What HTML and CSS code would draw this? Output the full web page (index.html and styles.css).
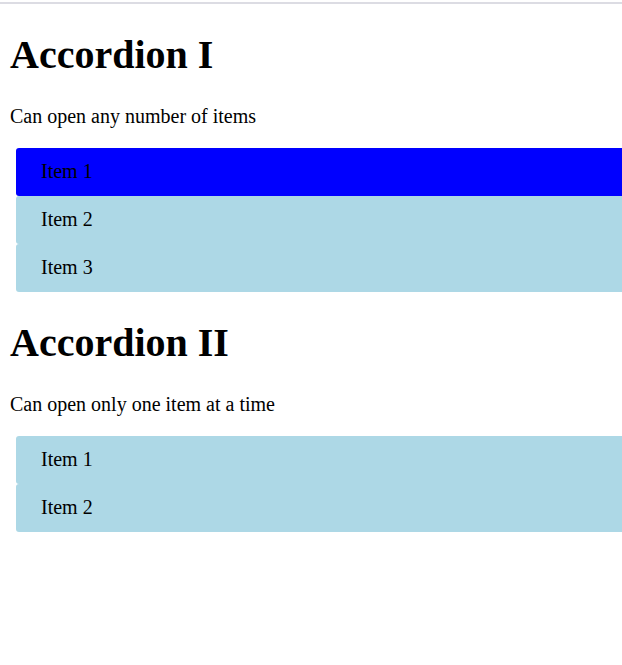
FILE: index.html
```html
<!DOCTYPE html>
<html>
<head>
<meta charset="utf-8">
<link rel="stylesheet" href="styles.css">
</head>
<body>
<div class="topbar"></div>
<main class="page">
  <section class="section">
    <h1 class="title">Accordion I</h1>
    <p class="desc">Can open any number of items</p>
    <div class="accordion">
      <div class="item active">Item 1</div>
      <div class="item">Item 2</div>
      <div class="item">Item 3</div>
    </div>
  </section>
  <section class="section">
    <h1 class="title">Accordion II</h1>
    <p class="desc">Can open only one item at a time</p>
    <div class="accordion">
      <div class="item">Item 1</div>
      <div class="item">Item 2</div>
    </div>
  </section>
</main>
</body>
</html>
```
FILE: styles.css
```css
html, body {
  margin: 0;
  padding: 0;
  overflow-x: hidden;
  background: #ffffff;
}
body {
  font-family: "Liberation Serif", "Times New Roman", serif;
  font-size: 20px;
  color: #000;
}
.topbar {
  height: 2px;
  margin-top: 2px;
  background: #dcdce3;
}
.page {
  padding: 0 10px;
}
.section {
  display: flex;
  flex-direction: column;
}
.title {
  font-size: 40px;
  font-weight: bold;
  margin: 27px 0 0;
}
.desc {
  margin: 27px 0 20px;
}
.accordion {
  margin-left: 6px;
  margin-right: -30px;
  display: flex;
  flex-direction: column;
}
.item {
  height: 48px;
  line-height: 46px;
  padding: 0 25px 2px;
  background: #add8e6;
  border-radius: 3px;
  box-sizing: border-box;
}
.item.active {
  background: #0000ff;
}
```
